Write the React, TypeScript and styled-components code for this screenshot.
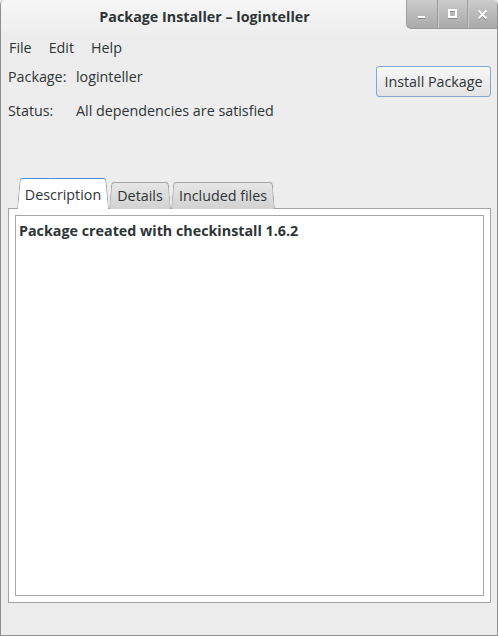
import React from "react";
import styled, { createGlobalStyle } from "styled-components";

const Global = createGlobalStyle`
  html, body { margin: 0; padding: 0; background: #ededed; }
  body { font-family: "Open Sans", "Noto Sans", sans-serif; color: #2e3436; }
  * { box-sizing: border-box; }
`;

const Window = styled.div`
  width: 498px;
  height: 636px;
  background: #ededed;
  border: 1px solid #8f8f8f;
  border-top: none;
  border-radius: 5px 5px 0 0;
  display: flex;
  flex-direction: column;
  overflow: hidden;
`;

const TitleBar = styled.div`
  height: 34px;
  display: flex;
  align-items: flex-start;
  background: linear-gradient(#f6f6f6, #eeeeee);
`;

const Title = styled.div`
  flex: 1;
  text-align: center;
  font-weight: 700;
  font-size: 14.3px;
  line-height: 34px;
  padding-left: 2px;
`;

const WinButtons = styled.div`
  display: flex;
  height: 29px;
  background: linear-gradient(#cbcbcb, #a9a9a9);
  border-bottom-left-radius: 5px;
  border-left: 1px solid #a0a0a0;
  border-bottom: 1px solid #9a9a9a;
`;

const WinButton = styled.div<{ $first?: boolean }>`
  width: 30px;
  display: flex;
  align-items: center;
  justify-content: center;
  border-left: ${(p) => (p.$first ? "none" : "1px solid #9c9c9c")};
  box-shadow: ${(p) => (p.$first ? "none" : "inset 1px 0 0 #c9c9c9")};
  svg { filter: drop-shadow(0 1px 0 rgba(0,0,0,0.25)); }
`;

const MenuBar = styled.div`
  display: flex;
  gap: 17px;
  padding: 0 0 0 8px;
  height: 26px;
  align-items: center;
  font-size: 14.3px;
`;

const MenuItem = styled.span``;

const Info = styled.div`
  display: grid;
  grid-template-columns: 68px 1fr auto;
  grid-template-rows: 34px 34px;
  align-items: center;
  padding: 0 6px 0 7px;
  margin-top: -1px;
  font-size: 14.3px;
`;

const Label = styled.span``;
const Value = styled.span``;

const Button = styled.button`
  grid-row: 1;
  grid-column: 3;
  height: 31px;
  width: 115px;
  margin-top: 10px;
  border: 1px solid #86a8d0;
  border-radius: 3px;
  background: linear-gradient(#f7f7f7, #e3e3e3);
  font-family: inherit;
  font-size: 14.3px;
  color: #2e3436;
  padding: 0;
`;

const Notebook = styled.div`
  margin: 51px 6px 0 7px;
  display: flex;
  flex-direction: column;
`;

const Tabs = styled.div`
  display: flex;
  align-items: flex-end;
  padding-left: 9px;
  margin-bottom: -1px;
  position: relative;
  z-index: 1;
`;

const Tab = styled.div<{ $active?: boolean; $w: number }>`
  position: relative;
  width: ${(p) => p.$w}px;
  height: ${(p) => (p.$active ? 31 : 27)}px;
  font-size: 14.3px;
  display: flex;
  align-items: center;
  justify-content: center;
  padding-top: ${(p) => (p.$active ? 2 : 0)}px;
  color: #2e3436;
  &::before, &::after {
    content: "";
    position: absolute;
    top: 0;
    bottom: 0;
    width: 60%;
    transform-origin: bottom;
    border: 1px solid #a3a3a3;
    border-bottom: none;
    border-top-color: ${(p) => (p.$active ? "#4a90d9" : "#a3a3a3")};
    background: ${(p) =>
      p.$active ? "#ffffff" : "linear-gradient(#e6e6e6, #d2d2d2)"};
    z-index: -1;
  }
  &::before {
    left: 0;
    border-right: none;
    border-top-left-radius: 3px;
    transform: skewX(-5deg);
  }
  &::after {
    right: 0;
    border-left: none;
    border-top-right-radius: 3px;
    transform: skewX(5deg);
  }
`;

const TabLabel = styled.span`
  position: relative;
`;

const Page = styled.div`
  height: 395px;
  border: 1px solid #a3a3a3;
  background: #ffffff;
  padding: 6px;
  position: relative;
`;

const TextView = styled.div`
  height: 100%;
  border: 1px solid #a8a8a8;
  padding: 5px 3px;
  font-size: 14.3px;
  font-weight: 700;
`;

export default function App() {
  return (
    <>
      <Global />
      <Window>
        <TitleBar>
          <Title>Package Installer – loginteller</Title>
          <WinButtons>
            <WinButton $first>
              <svg width="10" height="12" viewBox="0 0 10 12">
                <rect x="1" y="8" width="7" height="2" fill="#fff" />
              </svg>
            </WinButton>
            <WinButton>
              <svg width="10" height="10" viewBox="0 0 10 10">
                <rect x="1" y="1" width="7" height="7" fill="none" stroke="#fff" strokeWidth="2" />
              </svg>
            </WinButton>
            <WinButton>
              <svg width="11" height="11" viewBox="0 0 11 11">
                <path d="M1.5 1.5 L9.5 9.5 M9.5 1.5 L1.5 9.5" stroke="#fff" strokeWidth="2" />
              </svg>
            </WinButton>
          </WinButtons>
        </TitleBar>
        <MenuBar>
          <MenuItem>File</MenuItem>
          <MenuItem>Edit</MenuItem>
          <MenuItem>Help</MenuItem>
        </MenuBar>
        <Info>
          <Label>Package:</Label>
          <Value>loginteller</Value>
          <Button>Install Package</Button>
          <Label>Status:</Label>
          <Value>All dependencies are satisfied</Value>
        </Info>
        <Notebook>
          <Tabs>
            <Tab $active $w={92}>
              <TabLabel>Description</TabLabel>
            </Tab>
            <Tab $w={62}>
              <TabLabel>Details</TabLabel>
            </Tab>
            <Tab $w={104}>
              <TabLabel>Included files</TabLabel>
            </Tab>
          </Tabs>
          <Page>
            <TextView>Package created with checkinstall 1.6.2</TextView>
          </Page>
        </Notebook>
      </Window>
    </>
  );
}
